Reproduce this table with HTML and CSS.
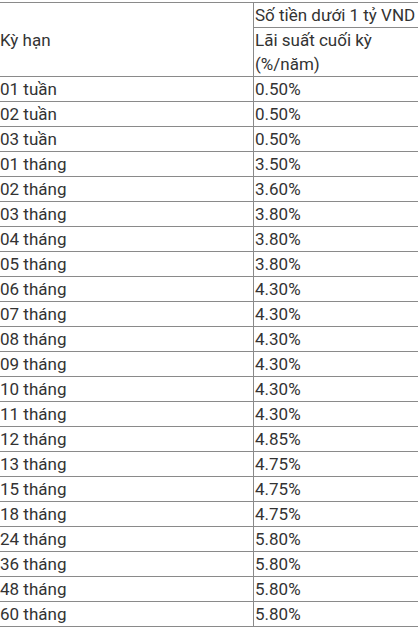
FILE: index.html
```html
<!DOCTYPE html>
<html lang="vi">
<head>
<meta charset="utf-8">
<link rel="stylesheet" href="styles.css">
</head>
<body>
<table class="rates">
  <tr>
    <td class="term" rowspan="2">Kỳ hạn</td>
    <td class="rate">Số tiền dưới 1 tỷ VND</td>
  </tr>
  <tr><td class="rate">Lãi suất cuối kỳ<br>(%/năm)</td></tr>
  <tr><td class="term">01 tuần</td><td class="rate">0.50%</td></tr>
  <tr><td class="term">02 tuần</td><td class="rate">0.50%</td></tr>
  <tr><td class="term">03 tuần</td><td class="rate">0.50%</td></tr>
  <tr><td class="term">01 tháng</td><td class="rate">3.50%</td></tr>
  <tr><td class="term">02 tháng</td><td class="rate">3.60%</td></tr>
  <tr><td class="term">03 tháng</td><td class="rate">3.80%</td></tr>
  <tr><td class="term">04 tháng</td><td class="rate">3.80%</td></tr>
  <tr><td class="term">05 tháng</td><td class="rate">3.80%</td></tr>
  <tr><td class="term">06 tháng</td><td class="rate">4.30%</td></tr>
  <tr><td class="term">07 tháng</td><td class="rate">4.30%</td></tr>
  <tr><td class="term">08 tháng</td><td class="rate">4.30%</td></tr>
  <tr><td class="term">09 tháng</td><td class="rate">4.30%</td></tr>
  <tr><td class="term">10 tháng</td><td class="rate">4.30%</td></tr>
  <tr><td class="term">11 tháng</td><td class="rate">4.30%</td></tr>
  <tr><td class="term">12 tháng</td><td class="rate">4.85%</td></tr>
  <tr><td class="term">13 tháng</td><td class="rate">4.75%</td></tr>
  <tr><td class="term">15 tháng</td><td class="rate">4.75%</td></tr>
  <tr><td class="term">18 tháng</td><td class="rate">4.75%</td></tr>
  <tr><td class="term">24 tháng</td><td class="rate">5.80%</td></tr>
  <tr><td class="term">36 tháng</td><td class="rate">5.80%</td></tr>
  <tr><td class="term">48 tháng</td><td class="rate">5.80%</td></tr>
  <tr><td class="term">60 tháng</td><td class="rate">5.80%</td></tr>
</table>
</body>
</html>
```

FILE: styles.css
```css
html, body {
  margin: 0;
  padding: 0;
  background: #ffffff;
}
body {
  padding-top: 2px;
  font-family: Roboto, "Liberation Sans", sans-serif;
  font-size: 17px;
  color: #333333;
}
.rates {
  border-collapse: collapse;
  width: 418px;
  table-layout: fixed;
}
.rates td {
  padding: 0 0 0 1px;
  line-height: 24px;
  border-top: 1px solid #8a8a8a;
  border-bottom: 1px solid #8a8a8a;
  vertical-align: middle;
  text-align: left;
}
.rates .term {
  width: 253px;
  padding-left: 0;
}
.rates .rate {
  border-left: 1px solid #8a8a8a;
}
```
